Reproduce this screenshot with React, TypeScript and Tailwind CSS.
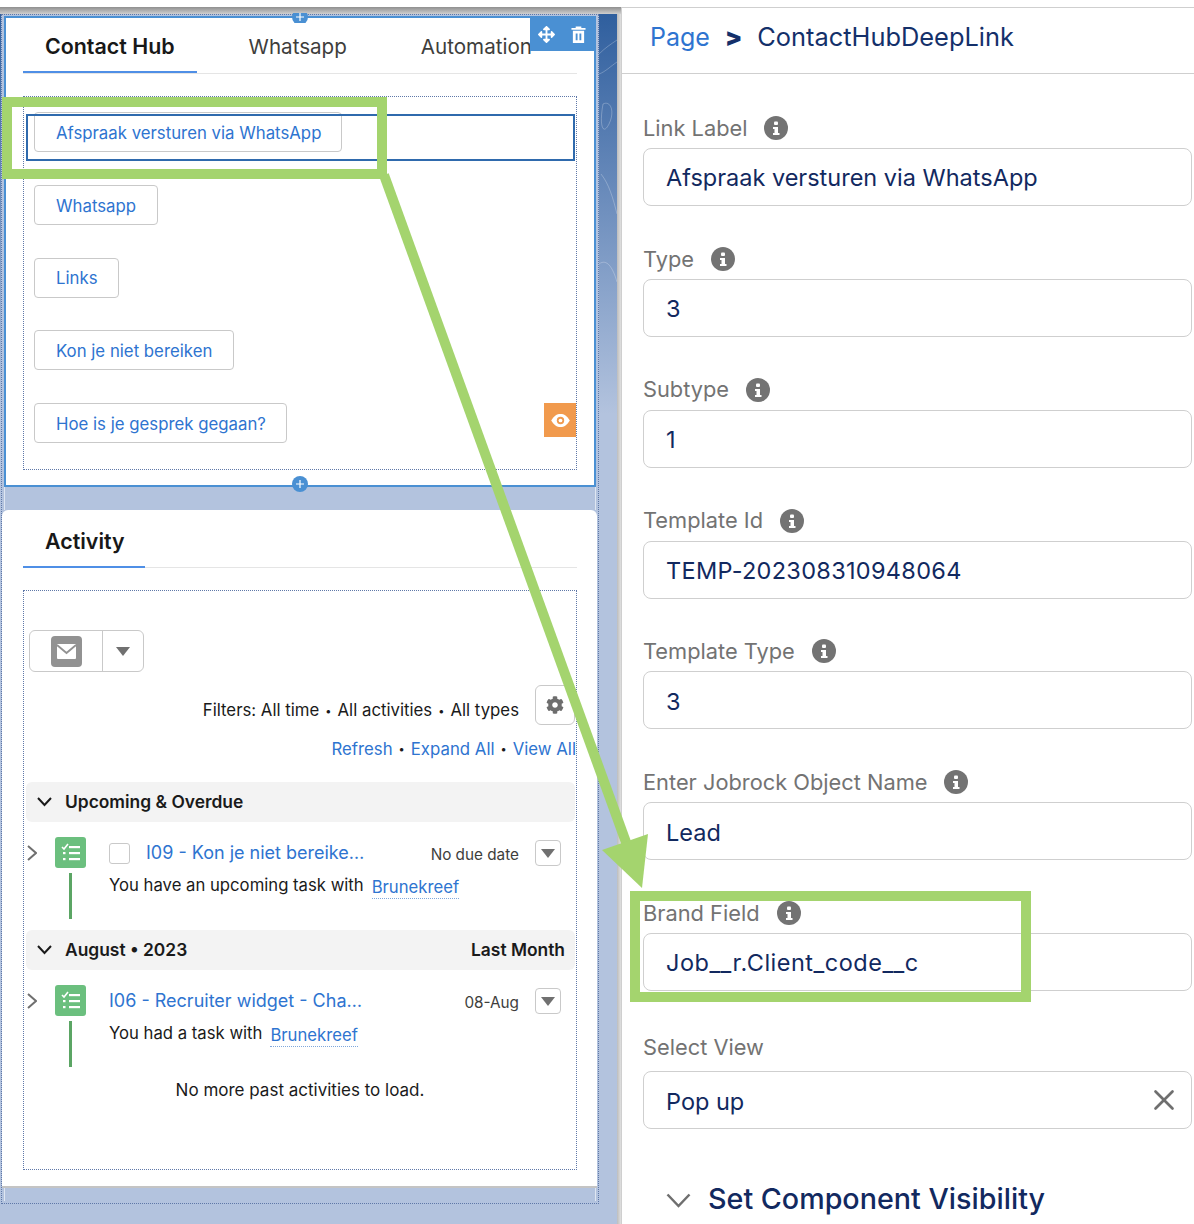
import { X } from "lucide-react"
import { FaArrowsAlt, FaCog } from "react-icons/fa"

const links = [
  { label: "Afspraak versturen via WhatsApp", w: "w-[308px]" },
  { label: "Whatsapp", w: "w-[124px]" },
  { label: "Links", w: "w-[85px]" },
  { label: "Kon je niet bereiken", w: "w-[200px]" },
  { label: "Hoe is je gesprek gegaan?", w: "w-[253px]" },
]

const fields = [
  { label: "Link Label", value: "Afspraak versturen via WhatsApp", cls: "" },
  { label: "Type", value: "3", cls: "" },
  { label: "Subtype", value: "1", cls: "" },
  { label: "Template Id", value: "TEMP-202308310948064", cls: "tracking-[0.3px]" },
  { label: "Template Type", value: "3", cls: "" },
  { label: "Enter Jobrock Object Name", value: "Lead", cls: "" },
  { label: "Brand Field", value: "Job__r.Client_code__c", cls: "tracking-[0.5px]" },
]

function InfoIcon() {
  return (
    <svg viewBox="0 0 24 24" className="w-6 h-6 shrink-0">
      <circle cx="12" cy="12" r="12" fill="#737373" />
      <rect x="10" y="5.5" width="4" height="3.5" rx="1" fill="#fff" />
      <path d="M9 11h5v6h1.5v2h-6.500v-2h1.500v-4h-1.500z" fill="#fff" />
    </svg>
  )
}

function TaskIcon() {
  return (
    <svg viewBox="0 0 31 31" className="w-[31px] h-[31px] shrink-0">
      <rect width="31" height="31" rx="3" fill="#6bbf7e" />
      <path d="M7 10l2 2 4-5" fill="none" stroke="#fff" strokeWidth="1.600" />
      <rect x="14" y="9" width="11" height="2.200" fill="#fff" />
      <rect x="14" y="15" width="11" height="2.200" fill="#fff" />
      <rect x="14" y="21" width="11" height="2.200" fill="#fff" />
      <rect x="8" y="15" width="2.500" height="2.200" fill="#fff" />
      <rect x="8" y="21" width="2.500" height="2.200" fill="#fff" />
    </svg>
  )
}

function Plus() {
  return (
    <svg viewBox="0 0 16 16" className="w-4 h-4 block">
      <circle cx="8" cy="8" r="8" fill="#4a90d3" />
      <path d="M8 4v8M4 8h8" stroke="#fff" strokeWidth="1.200" />
    </svg>
  )
}

function Caret() {
  return (
    <svg viewBox="0 0 14 9" className="w-[14px] h-[9px]">
      <path d="M0 0h14l-7 9z" fill="#707070" />
    </svg>
  )
}

function Dot() {
  return <span className="mx-[6px] text-[11px] align-[1.500px] text-[#1a1a1a]">•</span>
}

function TabBar({ children }: { children: React.ReactNode }) {
  return <div className="flex items-stretch gap-[30px] border-b border-[#e5e5e5]">{children}</div>
}

function ActivityRow({
  title,
  date,
  text,
  check,
}: {
  title: string
  date: string
  text: string
  check?: boolean
}) {
  return (
    <div className="flex h-[108px] pt-[15px]">
      <svg viewBox="0 0 10 16" className="w-[10px] h-[16px] mt-[8px] ml-[3px] mr-[18px] shrink-0" fill="none" stroke="#6f6f6f" strokeWidth="2">
        <path d="M1 1l8 7-8 7" />
      </svg>
      <div className="flex flex-col items-center w-[31px] shrink-0">
        <TaskIcon />
        <div className="w-[3px] h-[46px] mt-[5px] bg-[#5ba564]" />
      </div>
      <div className="ml-[23px] w-[452px] flex flex-col">
        <div className="flex items-center h-[26px] mt-[3px]">
          {check && <div className="w-[21px] h-[21px] mr-[16px] rounded-[3px] border border-[#c9c9c9] bg-white" />}
          <div className="text-[18px] text-[#2e74d0] leading-none whitespace-nowrap">{title}</div>
          <div className="ml-auto text-[15.300px] text-[#3e3e3c] mt-[4px]">{date}</div>
          <div className="ml-[16px] w-[26px] h-[26px] rounded-[4px] border border-[#c9c9c9] flex items-center justify-center">
            <Caret />
          </div>
        </div>
        <div className="flex mt-[7px] text-[16.700px] leading-[24px] text-[#1a1a1a] whitespace-nowrap">
          <span>{text}</span>
          <span className="ml-[8px] mt-[2px] h-[24px] leading-[24px] text-[#2e74d0] border-b border-dotted border-[#7fa8dc]">
            Brunekreef
          </span>
        </div>
      </div>
    </div>
  )
}

function SectionHeader({ title, right }: { title: string; right?: string }) {
  return (
    <div className="flex items-center h-[40px] ml-[2px] w-[549px] rounded-[6px] bg-[#f3f3f3] text-[17.400px] font-semibold text-[#1a1a1a]">
      <svg viewBox="0 0 15 10" className="w-[15px] h-[10px] ml-[11px] mr-[13px]" fill="none" stroke="#1a1a1a" strokeWidth="2">
        <path d="M1 1l6.500 7L14 1" />
      </svg>
      <span>{title}</span>
      {right && <span className="ml-auto mr-[10px]">{right}</span>}
    </div>
  )
}

export default function App() {
  return (
    <div className="relative w-[1194px] h-[1224px] overflow-hidden flex bg-white font-['Inter',sans-serif]">
      {/* builder canvas */}
      <div className="w-[621px] h-full shrink-0 flex flex-col">
        <div className="h-[7px] bg-white" />
        <div className="flex-1 flex flex-col bg-[#b3c3de]">
          <div className="h-[7px] bg-gradient-to-b from-[#8f8f8f] to-[#cfcfcf]" />
          <div className="flex flex-1">
            <div className="w-[1px] h-[400px] bg-gradient-to-b from-[#2f5f9e] to-[#b3c3de]" />
            <div className="relative w-[598px] h-[1190px] border border-dotted border-[#5f78a8]">
              <div className="relative ml-[2px] mt-[1px] w-[592px] h-[471px] bg-white border-2 border-[#4a90d3]">
                <div className="absolute left-[286px] top-[-5px] h-[10px] overflow-hidden">
                  <div className="mt-[-4px]">
                    <Plus />
                  </div>
                </div>
                <div className="absolute left-[286px] bottom-[-7px] z-10">
                  <Plus />
                </div>
                <div className="absolute right-0 top-0 w-[64px] h-[33px] bg-[#4a90d3] flex items-center justify-center gap-[16px] text-white z-10">
                  <FaArrowsAlt className="w-[17px] h-[17px]" />
                  <svg viewBox="0 0 16 18" className="w-[15px] h-[17px]">
                    <path d="M5 2V0.500h6V2h4.500v2H0.500V2zM2 5h12v13H2zM5 8v7h2V8zM9 8v7h2V8z" fill="#fff" fillRule="evenodd" />
                  </svg>
                </div>
                <div className="mx-[17px] overflow-hidden">
                  <TabBar>
                    <div className="h-[55px] pt-[4px] px-[22px] flex items-center text-[21.400px] font-semibold text-[#181818] border-b-2 border-[#4f8fe6] mb-[-1px] whitespace-nowrap">
                      Contact Hub
                    </div>
                    <div className="h-[55px] pt-[4px] px-[22px] flex items-center text-[20.600px] text-[#3e3e3c] whitespace-nowrap">Whatsapp</div>
                    <div className="h-[55px] pt-[4px] px-[22px] flex items-center text-[20.600px] text-[#3e3e3c] whitespace-nowrap">Automation</div>
                  </TabBar>
                </div>
                <div className="relative mx-[17px] mt-[22px] h-[374px] border border-dotted border-[#5f78a8] pl-[10px] pt-[15px] flex flex-col gap-[32.750px]">
                  {links.map((l) => (
                    <div
                      key={l.label}
                      className={`${l.w} h-[40px] pt-[3px] shrink-0 rounded-[4px] border border-[#c9c9c9] bg-white pl-[21px] flex items-center text-[16.800px] text-[#2e74d0] whitespace-nowrap`}
                    >
                      {l.label}
                    </div>
                  ))}
                  <div className="absolute left-[2px] top-[17px] w-[549px] h-[47px] border-2 border-[#2f6aad]" />
                  <div className="absolute right-0 top-[306px] w-[32px] h-[34px] bg-[#f19a4d] flex items-center justify-center">
                    <svg viewBox="0 0 20 14" className="w-[19px] h-[13px]">
                      <path d="M0 7C3 2 6 0 10 0s7 2 10 7c-3 5-6 7-10 7S3 12 0 7z" fill="#fff" />
                      <circle cx="10" cy="7" r="4" fill="#f19a4d" />
                      <circle cx="10" cy="7" r="2" fill="#fff" />
                    </svg>
                  </div>
                </div>
              </div>
              <div className="ml-[2px] w-[592px] h-[23px] border-x border-[#dfe6f1]" />
              <div className="w-[595px] h-[678px] bg-white rounded-t-[6px] border-b-2 border-[#c4c4c4]">
                <div className="ml-[21px] mr-[20px]">
                  <TabBar>
                    <div className="h-[58px] pt-[6px] pl-[22px] pr-[20px] flex items-center text-[21.400px] font-semibold text-[#181818] border-b-2 border-[#4f8fe6] mb-[-1px]">
                      Activity
                    </div>
                  </TabBar>
                </div>
                <div className="ml-[21px] mr-[20px] mt-[22px] h-[580px] border border-dotted border-[#5f78a8] pt-[39px] flex flex-col">
                  <div className="ml-[5px] w-[115px] h-[42px] flex rounded-[6px] border border-[#c9c9c9]">
                    <div className="w-[73px] flex items-center justify-center border-r border-[#c9c9c9]">
                      <svg viewBox="0 0 31 31" className="w-[31px] h-[31px]">
                        <rect width="31" height="31" rx="4" fill="#929292" />
                        <rect x="6" y="8" width="19" height="15" rx="1" fill="#fff" />
                        <path d="M6 9l9.500 8L25 9" fill="none" stroke="#929292" strokeWidth="1.800" />
                      </svg>
                    </div>
                    <div className="flex-1 flex items-center justify-center">
                      <Caret />
                    </div>
                  </div>
                  <div className="flex items-center justify-end mt-[13px] pr-[1px]">
                    <span className="text-[16.800px] text-[#1a1a1a] mt-[12px] whitespace-nowrap">
                      Filters: All time
                      <Dot />
                      All activities
                      <Dot />
                      All types
                    </span>
                    <div className="ml-[16px] w-[40px] h-[40px] rounded-[6px] border border-[#c9c9c9] flex items-center justify-center">
                      <FaCog className="w-[18px] h-[18px] text-[#6d6d6d]" />
                    </div>
                  </div>
                  <div className="flex justify-end items-center mt-[12px] text-[16.800px] text-[#2e74d0] whitespace-nowrap">
                    <span>Refresh</span>
                    <Dot />
                    <span>Expand All</span>
                    <Dot />
                    <span>View All</span>
                  </div>
                  <div className="mt-[20px]">
                    <SectionHeader title="Upcoming & Overdue" />
                    <ActivityRow title="I09 - Kon je niet bereike…" date="No due date" text="You have an upcoming task with" check />
                    <SectionHeader title="August • 2023" right="Last Month" />
                    <ActivityRow title="I06 - Recruiter widget - Cha…" date="08-Aug" text="You had a task with" />
                    <div className="text-center text-[17px] text-[#1a1a1a]">No more past activities to load.</div>
                  </div>
                </div>
              </div>
              <div className="ml-[2px] w-[592px] h-[13px] border-x border-[#dfe6f1]" />
            </div>
            <div className="w-[18px] h-[400px] bg-gradient-to-b from-[#2f5f9e] to-[#b3c3de]">
              <svg viewBox="0 0 18 400" className="w-[18px] h-[400px]" fill="none" stroke="#ffffff" strokeOpacity="0.25">
                <path d="M0 40C6 34 12 30 18 26M0 60c6-2 12-8 18-12M4 90c8-4 12 8 6 20s-10 2-6-20M2 160c8 10 12 24 16 40M0 250c8-6 14 4 18 18" />
              </svg>
            </div>
            <div className="w-[4px] bg-gradient-to-r from-[#bdbdbd] to-[#e0e0e0]" />
          </div>
        </div>
      </div>

      {/* properties panel */}
      <div className="flex-1 h-full flex flex-col pt-[7px]">
        <div className="flex-1 flex flex-col border-l border-t border-[#cfcfcf] bg-white">
          <div className="h-[66px] pb-[6px] border-b border-[#cfcfcf] pl-[28px] flex items-center text-[25.400px] text-[#14306a] shrink-0 whitespace-nowrap">
            <span className="text-[#2e74d0] text-[25px]">Page</span>
            <span className="mx-[15px] font-black text-[25px]">&gt;</span>
            <span>ContactHubDeepLink</span>
          </div>
          <div className="pl-[21px] pr-[2px] pt-[34px] flex flex-col">
            {fields.map((f) => (
              <div key={f.label} className="mb-[32.850px]">
                <div className="h-[40px] flex items-center gap-[17px] text-[21.800px] text-[#737373]">
                  <span>{f.label}</span>
                  <InfoIcon />
                </div>
                <div className={`h-[58px] rounded-[8px] border border-[#cfcfcf] pl-[22px] pt-[2px] flex items-center text-[23.500px] text-[#12295f] ${f.cls}`}>
                  {f.value}
                </div>
              </div>
            ))}
            <div className="mt-[3.300px]">
              <div className="h-[40px] flex items-center text-[21.800px] text-[#737373] mb-[4px]">Select View</div>
              <div className="h-[58px] rounded-[8px] border border-[#cfcfcf] pl-[22px] pr-[10px] pt-[2px] flex items-center justify-between text-[23.500px] text-[#12295f]">
                <span>Pop up</span>
                <X className="w-[34px] h-[34px] text-[#6f6f6f] mt-[-2px]" strokeWidth={1.900} />
              </div>
            </div>
            <div className="flex items-center mt-[48px] ml-[23px] text-[28.700px] font-medium text-[#12295f] whitespace-nowrap">
              <svg viewBox="0 0 25 15" className="w-[25px] h-[15px] mr-[17px] mt-[4px]" fill="none" stroke="#6f6f6f" strokeWidth="2.500">
                <path d="M1.500 1.500L12.500 13 23.500 1.500" />
              </svg>
              <span>Set Component Visibility</span>
            </div>
          </div>
        </div>
      </div>

      {/* green callouts */}
      <svg className="absolute inset-0 w-full h-full pointer-events-none z-20" viewBox="0 0 1194 1224" fill="none" stroke="#a4d46e">
        <rect x="7" y="102" width="375" height="72" strokeWidth="10" />
        <rect x="635" y="896" width="391" height="101" strokeWidth="10" />
        <path d="M384 175L627 845" strokeWidth="10" />
        <path d="M602 850L648 834L642 888z" fill="#a4d46e" stroke="none" />
      </svg>
    </div>
  )
}
